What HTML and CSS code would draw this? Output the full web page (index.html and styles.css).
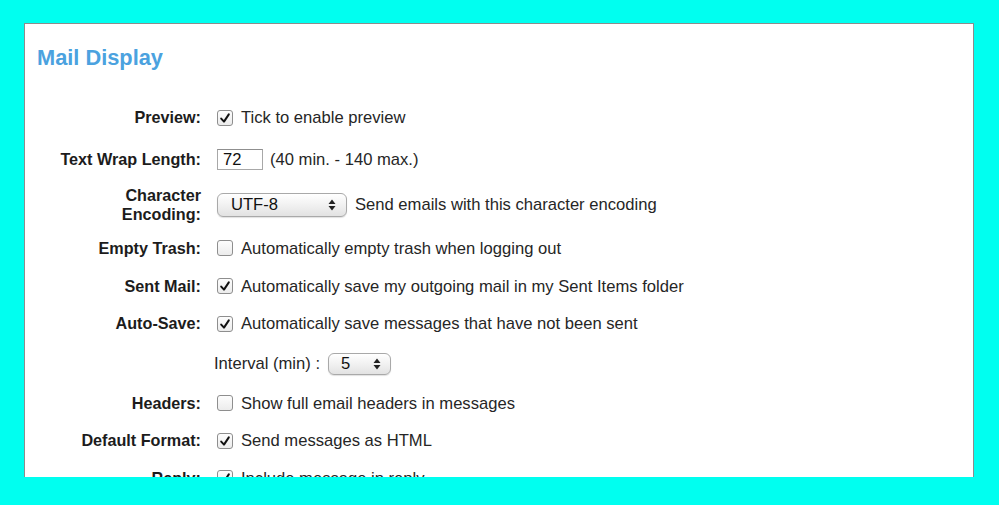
FILE: index.html
```html
<!DOCTYPE html>
<html>
<head>
<meta charset="utf-8">
<link rel="stylesheet" href="styles.css">
</head>
<body>
<div class="panel">
  <h1 class="title">Mail Display</h1>
  <div class="form">
    <div class="row">
      <div class="label">Preview:</div>
      <div class="ctrl"><span class="cb"><svg viewBox="0 0 14 14"><path d="M3.2 7.6 L6 10.6 L10.8 3.4"/></svg></span><span>Tick to enable preview</span></div>
    </div>
    <div class="row">
      <div class="label">Text Wrap Length:</div>
      <div class="ctrl"><input class="txt" type="text" value="72"><span>(40 min. - 140 max.)</span></div>
    </div>
    <div class="row">
      <div class="label">Character<br>Encoding:</div>
      <div class="ctrl"><span class="sel sel-wide"><span>UTF-8</span><svg class="arr" viewBox="0 0 8 12"><path d="M4 0.5 L7.5 5 L0.5 5 Z M4 11.5 L7.5 7 L0.5 7 Z"/></svg></span><span>Send emails with this character encoding</span></div>
    </div>
    <div class="row">
      <div class="label">Empty Trash:</div>
      <div class="ctrl"><span class="cb"></span><span>Automatically empty trash when logging out</span></div>
    </div>
    <div class="row">
      <div class="label">Sent Mail:</div>
      <div class="ctrl"><span class="cb"><svg viewBox="0 0 14 14"><path d="M3.2 7.6 L6 10.6 L10.8 3.4"/></svg></span><span>Automatically save my outgoing mail in my Sent Items folder</span></div>
    </div>
    <div class="row">
      <div class="label">Auto-Save:</div>
      <div class="ctrl"><span class="cb"><svg viewBox="0 0 14 14"><path d="M3.2 7.6 L6 10.6 L10.8 3.4"/></svg></span><span>Automatically save messages that have not been sent</span></div>
    </div>
    <div class="row">
      <div class="label"></div>
      <div class="ctrl interval"><span>Interval (min) :</span><span class="sel sel-small"><span>5</span><svg class="arr" viewBox="0 0 8 12"><path d="M4 0.5 L7.5 5 L0.5 5 Z M4 11.5 L7.5 7 L0.5 7 Z"/></svg></span></div>
    </div>
    <div class="row">
      <div class="label">Headers:</div>
      <div class="ctrl"><span class="cb"></span><span>Show full email headers in messages</span></div>
    </div>
    <div class="row">
      <div class="label">Default Format:</div>
      <div class="ctrl"><span class="cb"><svg viewBox="0 0 14 14"><path d="M3.2 7.6 L6 10.6 L10.8 3.4"/></svg></span><span>Send messages as HTML</span></div>
    </div>
    <div class="row">
      <div class="label">Reply:</div>
      <div class="ctrl"><span class="cb"><svg viewBox="0 0 14 14"><path d="M3.2 7.6 L6 10.6 L10.8 3.4"/></svg></span><span>Include message in reply</span></div>
    </div>
  </div>
</div>
</body>
</html>
```
FILE: styles.css
```css
html, body {
  margin: 0;
  padding: 0;
  background: #00fff0;
  height: 100%;
  overflow: hidden;
}
body {
  font-family: "Liberation Sans", Arial, sans-serif;
  color: #222;
}
.panel {
  box-sizing: border-box;
  margin: 23px 25px 0 24px;
  height: 454px;
  background: #fff;
  border: 1px solid #8c8c8c;
  border-bottom: none;
  overflow: hidden;
}
.title {
  margin: 0;
  padding: 22px 0 0 12px;
  font-size: 21.8px;
  line-height: 24px;
  font-weight: bold;
  color: #4ba2df;
}
.form {
  margin-top: 28px;
  display: grid;
  grid-template-rows: 39px 44px 47px 40px 36px 39px 41px 38px 37px 38px;
}
.row {
  display: grid;
  grid-template-columns: 176px 1fr;
  column-gap: 16px;
  align-items: center;
}
.label {
  text-align: right;
  font-weight: bold;
  font-size: 16.2px;
  line-height: 19px;
  color: #1c1c1c;
}
.ctrl {
  display: flex;
  align-items: center;
  gap: 8px;
  font-size: 16.6px;
  line-height: 19px;
  color: #262626;
  white-space: nowrap;
}
.cb {
  box-sizing: border-box;
  width: 16px;
  height: 16px;
  border: 1px solid #8e8e8e;
  border-radius: 3px;
  background: linear-gradient(#fdfdfd, #ececec);
  display: inline-flex;
  flex: none;
}
.cb svg {
  width: 14px;
  height: 14px;
}
.cb path {
  fill: none;
  stroke: #111;
  stroke-width: 2;
  stroke-linecap: round;
  stroke-linejoin: round;
}
.txt {
  box-sizing: border-box;
  width: 46px;
  height: 21px;
  margin: 0 -1px 0 0;
  padding: 1px 5px 0;
  border: 1px solid #a8a8a8;
  border-top-color: #8f8f8f;
  font-family: "Liberation Sans", Arial, sans-serif;
  font-size: 16.6px;
  color: #111;
  background: #fff;
  outline: none;
}
.sel {
  box-sizing: border-box;
  display: inline-flex;
  align-items: center;
  justify-content: space-between;
  border: 1px solid #a9a9a9;
  border-radius: 6px;
  background: linear-gradient(#ffffff, #f1f1f1 50%, #e2e2e2);
  box-shadow: 0 1px 1px rgba(0,0,0,0.12);
  color: #111;
  flex: none;
}
.sel-wide {
  width: 130px;
  height: 24px;
  padding: 0 10px 0 13px;
}
.sel-small {
  width: 63px;
  height: 22px;
  padding: 0 9px 0 12px;
}
.arr {
  width: 8px;
  height: 12px;
}
.arr path {
  fill: #222;
}
.interval {
  margin-left: -3px;
  gap: 8px;
}
```
